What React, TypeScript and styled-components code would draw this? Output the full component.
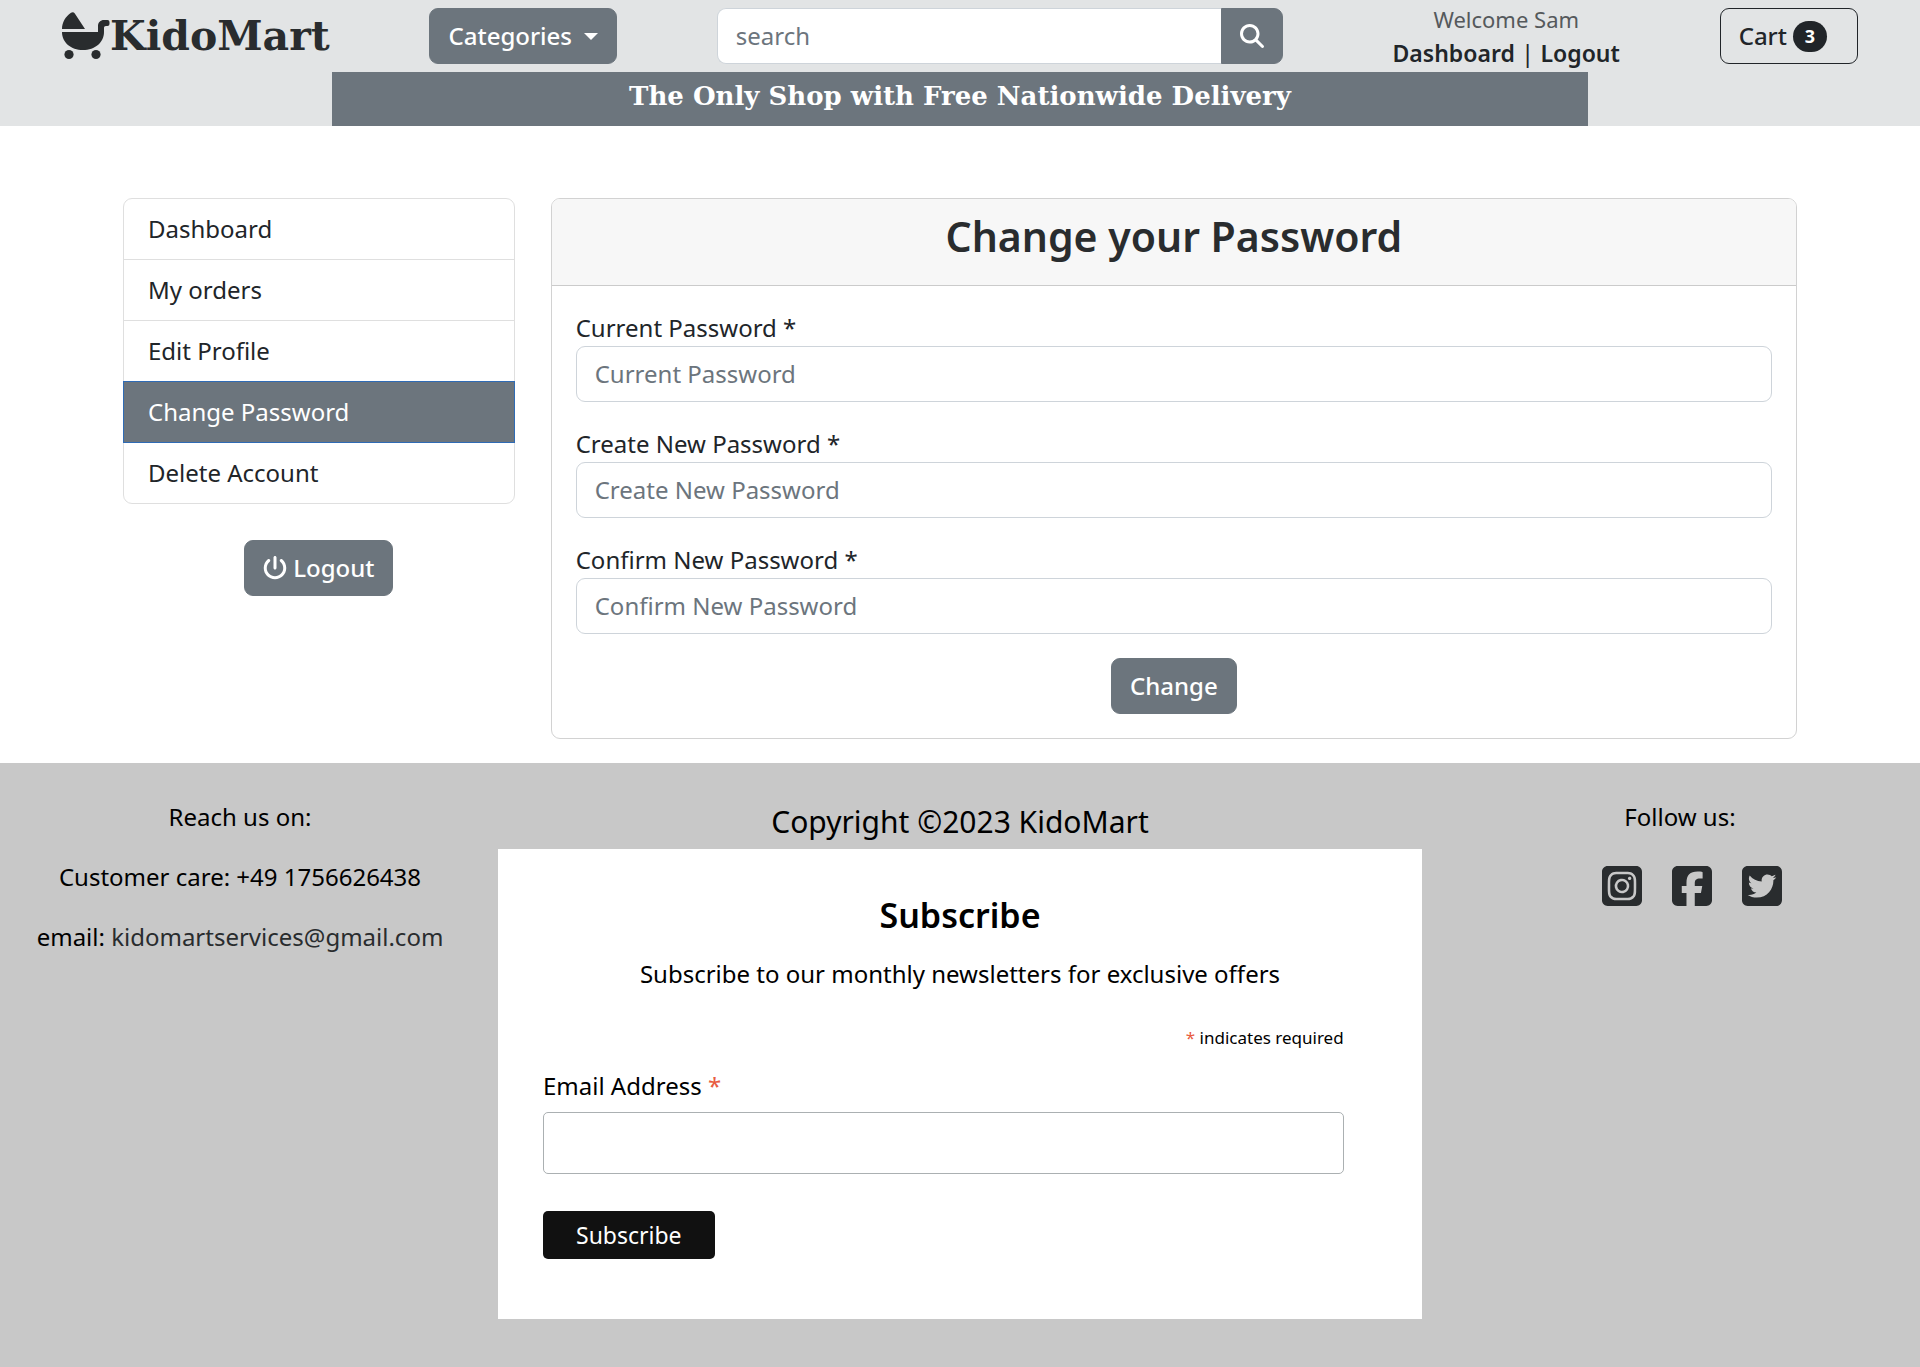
import React from "react";
import styled, { createGlobalStyle } from "styled-components";
import {
  FaMagnifyingGlass,
  FaPowerOff,
  FaSquareFacebook,
  FaSquareInstagram,
  FaSquareTwitter,
} from "react-icons/fa6";

const slate = "#6c757d";
const ink = "#212529";
const charcoal = "#292c2e";
const sans = `"Noto Sans", "Open Sans", sans-serif`;
const slab = `"DejaVu Serif", "Liberation Serif", serif`;

const GlobalStyle = createGlobalStyle`
  *, *::before, *::after { box-sizing: border-box; }
  body {
    margin: 0;
    background: #fff;
    color: ${ink};
    font-family: ${sans};
    font-size: 24px;
    line-height: 36px;
  }
  h1, h2, p, ul { margin: 0; padding: 0; }
  ul { list-style: none; }
  a { color: inherit; text-decoration: none; }
  button, input { font: inherit; }
`;

const Page = styled.div`
  display: flex;
  flex-direction: column;
  min-height: 100vh;
`;

const Header = styled.header`
  background: #e2e4e5;
`;

const TopBar = styled.div`
  display: flex;
  align-items: center;
  justify-content: space-between;
  height: 72px;
  padding: 0 62px;
`;

const Logo = styled.a`
  display: flex;
  align-items: center;
  color: ${charcoal};
  font-family: ${slab};
  font-size: 41px;
  font-weight: 700;
  line-height: 48px;
  svg { width: 48px; height: 48px; }
`;

const Button = styled.button`
  display: inline-flex;
  align-items: center;
  gap: 6px;
  height: 56px;
  padding: 0 18px;
  border: 1px solid ${slate};
  border-radius: 9px;
  background: ${slate};
  color: #fff;
  font-weight: 500;
  cursor: pointer;
  svg { width: 24px; height: 24px; }
`;

const Caret = styled.span`
  margin-left: 6px;
  border: 7px solid transparent;
  border-top-color: currentColor;
  border-bottom: 0;
`;

const SearchForm = styled.form`
  display: flex;
  width: 566px;
`;

const TextInput = styled.input`
  display: block;
  width: 100%;
  min-width: 0;
  height: 56px;
  padding: 0 18px 2px;
  border: 1px solid #ced4da;
  border-radius: 9px;
  background: #fff;
  color: ${ink};
  outline: 0;
  &::placeholder { color: ${slate}; opacity: 1; }
`;

const SearchInput = styled(TextInput)`
  border-right: 0;
  border-radius: 9px 0 0 9px;
`;

const SearchButton = styled(Button)`
  border-radius: 0 9px 9px 0;
`;

const Account = styled.div`
  padding: 2px 0 0 10px;
  text-align: center;
`;

const Welcome = styled.p`
  color: #55595c;
  font-size: 22px;
  line-height: 32px;
`;

const AccountLink = styled.a`
  font-size: 23px;
  font-weight: 600;
`;

const CartButton = styled(Button)`
  padding-right: 30px;
  border-color: ${ink};
  background: transparent;
  color: ${ink};
`;

const Badge = styled.span`
  display: inline-flex;
  align-items: center;
  justify-content: center;
  width: 34px;
  height: 31px;
  border-radius: 16px;
  background: ${ink};
  color: #fff;
  font-size: 18px;
  font-weight: 700;
  line-height: 18px;
`;

const Banner = styled.p`
  width: calc(100% - 664px);
  height: 54px;
  margin: 0 auto;
  padding-top: 6px;
  background: ${slate};
  color: #fff;
  font-family: ${slab};
  font-size: 26px;
  font-weight: 700;
  text-align: center;
`;

const Main = styled.main`
  display: grid;
  grid-template-columns: 11fr 35fr;
  align-items: start;
  gap: 36px;
  padding: 72px 123px 24px;
`;

const Sidebar = styled.aside`
  display: flex;
  flex-direction: column;
  align-items: center;
  gap: 36px;
`;

const Menu = styled.ul`
  width: 100%;
  border: 1px solid #dfdfdf;
  border-radius: 9px;
`;

const MenuItem = styled.li`
  & + & { border-top: 1px solid #dfdfdf; }
`;

const MenuLink = styled.a<{ $active?: boolean }>`
  display: block;
  padding: 12px 24px;
  ${({ $active }) =>
    $active &&
    `
      position: relative;
      margin: -1px;
      border: 1px solid #2f6bb5;
      background: ${slate};
      color: #fff;
    `}
`;

const Card = styled.section`
  border: 1px solid #d2d2d2;
  border-radius: 9px;
  overflow: hidden;
`;

const CardHeader = styled.div`
  padding: 12px 24px 24px;
  border-bottom: 1px solid #cbcbcb;
  background: #f7f7f7;
`;

const CardTitle = styled.h1`
  color: ${charcoal};
  font-size: 41px;
  font-weight: 600;
  line-height: 50px;
  text-align: center;
`;

const PasswordForm = styled.form`
  display: flex;
  flex-direction: column;
  gap: 24px;
  padding: 24px;
`;

const Label = styled.label`
  display: block;
`;

const SubmitButton = styled(Button)`
  align-self: center;
`;

const Footer = styled.footer`
  display: grid;
  grid-template-columns: 1fr 2fr 1fr;
  flex: 1;
  padding: 36px 0 48px;
  background: #c8c8c8;
  color: #000;
  text-align: center;
`;

const FooterColumn = styled.div`
  display: flex;
  flex-direction: column;
  gap: 24px;
`;

const MutedLink = styled.a`
  color: ${charcoal};
`;

const Copyright = styled.p`
  margin-bottom: 5px;
  font-size: 30px;
  line-height: 45px;
`;

const Newsletter = styled.div`
  padding: 0 18px;
`;

const SubscribeForm = styled.form`
  display: flex;
  flex-direction: column;
  align-items: flex-start;
  padding: 44px 45px 60px;
  background: #fff;
`;

const SubscribeTitle = styled.h2`
  align-self: center;
  margin-bottom: 19px;
  font-size: 34px;
  font-weight: 600;
  line-height: 44px;
`;

const SubscribeIntro = styled.p`
  align-self: center;
  margin-bottom: 34px;
`;

const RequiredNote = styled.p`
  width: 96%;
  margin-bottom: 18px;
  font-size: 17px;
  line-height: 24px;
  text-align: right;
`;

const Asterisk = styled.span`
  color: #e85c41;
`;

const EmailInput = styled.input`
  width: 96%;
  height: 62px;
  margin: 8px 0 37px;
  padding: 0 12px;
  border: 1px solid #abb0b2;
  border-radius: 5px;
  background: #fff;
  outline: 0;
`;

const SubscribeButton = styled.button`
  height: 48px;
  padding: 0 33px;
  border: 0;
  border-radius: 5px;
  background: #111;
  color: #fff;
  font-size: 23px;
  cursor: pointer;
`;

const SocialLinks = styled.div`
  display: flex;
  justify-content: center;
  gap: 30px;
  padding: 4px 0 0 24px;
  color: ${charcoal};
  a { display: flex; }
  svg { width: 40px; height: 46px; }
`;

const menu = ["Dashboard", "My orders", "Edit Profile", "Change Password", "Delete Account"];

const fields = [
  { id: "current-password", label: "Current Password" },
  { id: "new-password", label: "Create New Password" },
  { id: "confirm-password", label: "Confirm New Password" },
];

function CarriageIcon() {
  return (
    <svg viewBox="0 0 48 48" fill="currentColor" aria-hidden="true">
      <path d="M0 17C0 10.500 3.500 4.500 9 .8c1.400-1 2.900-.7 3.800.7L23 17Z" />
      <path d="M0 20h36v-6c0-3.600 2.400-6 6-6h3.500a2 2 0 0 1 2 2v2a2 2 0 0 1-2 2H44c-1.400 0-2 .7-2 2v4c0 10.500-9 18-21 18S0 30.500 0 20Z" />
      <circle cx="7" cy="42.500" r="4.600" />
      <circle cx="34" cy="42.500" r="4.600" />
    </svg>
  );
}

export default function App() {
  return (
    <Page>
      <GlobalStyle />
      <Header>
        <TopBar>
          <Logo href="#">
            <CarriageIcon />
            KidoMart
          </Logo>
          <Button type="button">
            Categories <Caret />
          </Button>
          <SearchForm role="search">
            <SearchInput type="search" placeholder="search" aria-label="Search" />
            <SearchButton type="button" aria-label="Search products">
              <FaMagnifyingGlass aria-hidden />
            </SearchButton>
          </SearchForm>
          <Account>
            <Welcome>Welcome Sam</Welcome>
            <AccountLink href="#">Dashboard</AccountLink> | <AccountLink href="#">Logout</AccountLink>
          </Account>
          <CartButton type="button">
            Cart <Badge>3</Badge>
          </CartButton>
        </TopBar>
        <Banner>The Only Shop with Free Nationwide Delivery</Banner>
      </Header>

      <Main>
        <Sidebar>
          <Menu>
            {menu.map((item) => (
              <MenuItem key={item}>
                <MenuLink href="#" $active={item === "Change Password"}>
                  {item}
                </MenuLink>
              </MenuItem>
            ))}
          </Menu>
          <Button type="button">
            <FaPowerOff aria-hidden />
            Logout
          </Button>
        </Sidebar>
        <Card>
          <CardHeader>
            <CardTitle>Change your Password</CardTitle>
          </CardHeader>
          <PasswordForm>
            {fields.map(({ id, label }) => (
              <div key={id}>
                <Label htmlFor={id}>{label} *</Label>
                <TextInput id={id} type="password" placeholder={label} />
              </div>
            ))}
            <SubmitButton type="button">Change</SubmitButton>
          </PasswordForm>
        </Card>
      </Main>

      <Footer>
        <FooterColumn>
          <p>Reach us on:</p>
          <p>Customer care: +49 1756626438</p>
          <p>
            email: <MutedLink href="mailto:kidomartservices@gmail.com">kidomartservices@gmail.com</MutedLink>
          </p>
        </FooterColumn>
        <Newsletter>
          <Copyright>Copyright ©2023 KidoMart</Copyright>
          <SubscribeForm>
            <SubscribeTitle>Subscribe</SubscribeTitle>
            <SubscribeIntro>Subscribe to our monthly newsletters for exclusive offers</SubscribeIntro>
            <RequiredNote>
              <Asterisk>*</Asterisk> indicates required
            </RequiredNote>
            <Label htmlFor="email">
              Email Address <Asterisk>*</Asterisk>
            </Label>
            <EmailInput id="email" type="email" />
            <SubscribeButton type="button">Subscribe</SubscribeButton>
          </SubscribeForm>
        </Newsletter>
        <FooterColumn>
          <p>Follow us:</p>
          <SocialLinks>
            <a href="#" aria-label="Instagram"><FaSquareInstagram aria-hidden /></a>
            <a href="#" aria-label="Facebook"><FaSquareFacebook aria-hidden /></a>
            <a href="#" aria-label="Twitter"><FaSquareTwitter aria-hidden /></a>
          </SocialLinks>
        </FooterColumn>
      </Footer>
    </Page>
  );
}
